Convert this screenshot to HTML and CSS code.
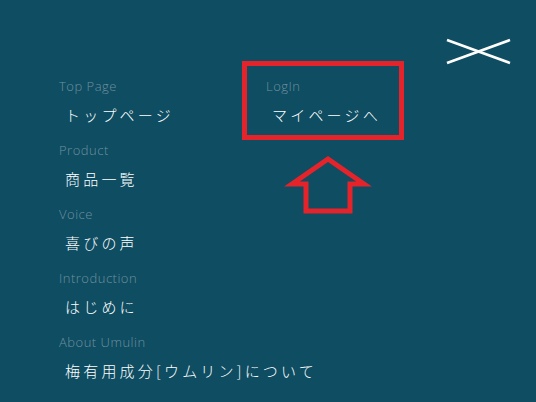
FILE: index.html
```html
<!DOCTYPE html>
<html lang="ja">
<head>
<meta charset="utf-8">
<title>Menu</title>
<link rel="stylesheet" href="styles.css">
</head>
<body>
<nav class="menu">
  <div class="col col-main">
    <a class="item" href="#"><span class="label">Top Page</span><span class="jp">トップページ</span></a>
    <a class="item" href="#"><span class="label">Product</span><span class="jp">商品一覧</span></a>
    <a class="item" href="#"><span class="label">Voice</span><span class="jp">喜びの声</span></a>
    <a class="item" href="#"><span class="label">Introduction</span><span class="jp">はじめに</span></a>
    <a class="item" href="#"><span class="label">About Umulin</span><span class="jp">梅有用成分[ウムリン]について</span></a>
  </div>
  <div class="col col-side">
    <a class="item item-login" href="#"><span class="label">LogIn</span><span class="jp">マイページへ</span></a>
    <svg class="arrow" width="90" height="66" viewBox="0 0 90 66" aria-hidden="true">
      <polygon points="44,7 80,32 66,32 66,59 22,59 22,32 8,32" fill="none" stroke="#e5232b" stroke-width="5" stroke-linejoin="miter"/>
    </svg>
  </div>
</nav>
<button class="close" type="button" aria-label="close">
  <svg width="70" height="32" viewBox="0 0 70 32" aria-hidden="true">
    <line x1="3" y1="4" x2="66" y2="27" stroke="#fff" stroke-width="2.6"/>
    <line x1="3" y1="27" x2="66" y2="4" stroke="#fff" stroke-width="2.6"/>
  </svg>
</button>
</body>
</html>
```
FILE: styles.css
```css
html, body {
  margin: 0;
  padding: 0;
}
body {
  width: 536px;
  height: 402px;
  overflow: hidden;
  background: #0e4d62;
  position: relative;
  font-family: "Open Sans", "Noto Sans", sans-serif;
}
.menu {
  display: flex;
  padding: 61px 0 0 59px;
}
.col-main {
  width: 183px;
  padding-top: 17px;
}
.col-side {
  display: flex;
  flex-direction: column;
  align-items: flex-start;
}
.item {
  display: block;
  text-decoration: none;
  margin-bottom: 16px;
}
.label {
  display: block;
  font-family: "Open Sans", "Noto Sans", sans-serif;
  font-weight: 300;
  font-size: 13px;
  line-height: 16px;
  letter-spacing: 0.5px;
  color: #6f909f;
}
.jp {
  display: block;
  margin-top: 10px;
  padding-left: 6px;
  font-family: "Noto Sans CJK JP", sans-serif;
  font-weight: 300;
  font-size: 15px;
  line-height: 22px;
  letter-spacing: 3.2px;
  color: #ffffff;
  white-space: nowrap;
}
.item-login {
  box-sizing: border-box;
  width: 162px;
  height: 79px;
  margin: 0;
  padding: 12px 17px 0 19px;
  border: 5px solid #e5232b;
}
.arrow {
  display: block;
  margin: 12px 0 0 42px;
}
.close {
  position: absolute;
  left: 444px;
  top: 36px;
  padding: 0;
  border: 0;
  background: none;
  cursor: pointer;
}
.close svg {
  display: block;
}
```
